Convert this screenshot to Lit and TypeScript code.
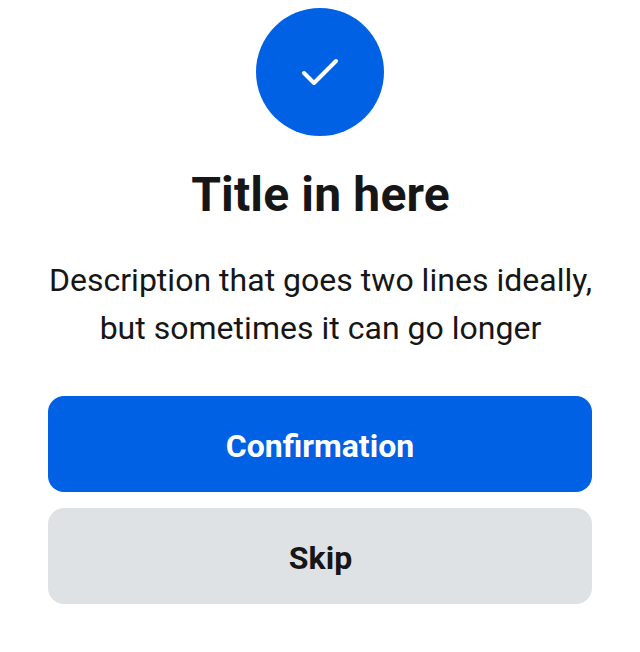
import { LitElement, html, css } from "lit";
import { customElement } from "lit/decorators.js";

@customElement("app-root")
export class AppRoot extends LitElement {
  static styles = css`
    :host {
      display: flex;
      flex-direction: column;
      align-items: center;
      box-sizing: border-box;
      height: 652px;
      padding: 8px 48px 48px;
      background: #fff;
      color: #161616;
      font-family: Roboto, sans-serif;
      text-align: center;
    }
    .badge {
      display: flex;
      align-items: center;
      justify-content: center;
      width: 128px;
      height: 128px;
      border-radius: 50%;
      background: #0061e4;
    }
    .title {
      margin: 25px 0 0;
      padding-left: 1px;
      font-size: 48px;
      line-height: 68px;
      font-weight: 700;
      letter-spacing: 0.16px;
      white-space: nowrap;
    }
    .description {
      margin: 27px 0 0;
      padding-left: 1px;
      font-size: 32px;
      line-height: 48px;
      letter-spacing: 0.02px;
      white-space: nowrap;
    }
    .actions {
      display: flex;
      flex-direction: column;
      align-self: stretch;
      gap: 16px;
      margin-top: 44px;
    }
    .button {
      height: 96px;
      padding: 4px 0 0 1px;
      border: 0;
      border-radius: 16px;
      background: #dee2e5;
      color: #161616;
      font: 700 32px/48px Roboto, sans-serif;
    }
    .primary {
      padding-left: 0;
      background: #0061e4;
      color: #fff;
    }
  `;

  render() {
    return html`
      <div class="badge">
        <svg width="64" height="64" viewBox="0 0 64 64" fill="none" stroke="#fff" stroke-width="4" stroke-linecap="round" stroke-linejoin="round">
          <path d="M16 33L26 43L48 21" />
        </svg>
      </div>
      <h1 class="title">Title in here</h1>
      <p class="description">Description that goes two lines ideally,<br />but sometimes it can go longer</p>
      <div class="actions">
        <button class="button primary">Confirmation</button>
        <button class="button">Skip</button>
      </div>
    `;
  }
}
